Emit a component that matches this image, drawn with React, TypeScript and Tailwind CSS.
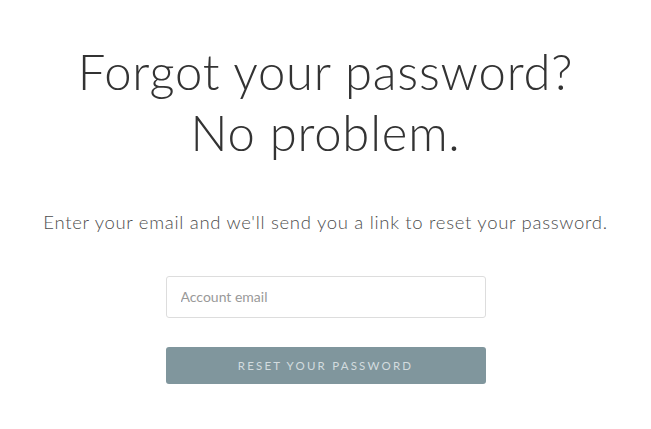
import React from "react";

export default function App() {
  return (
    <div className="min-h-[429px] w-full bg-white flex flex-col items-center pt-[41px] font-['Lato',sans-serif]">
      <h1 className="text-center text-[49px] leading-[61px] font-light text-[#333] tracking-[0.8px]">
        Forgot your password?
        <br />
        No problem.
      </h1>
      <p className="mt-[46px] text-[18.5px] font-light text-[#4d4d4d] tracking-[0.7px]">
        Enter your email and we'll send you a link to reset your password.
      </p>
      <form className="mt-[39px] w-[320px] flex flex-col" onSubmit={(e) => e.preventDefault()}>
        <input
          type="email"
          placeholder="Account email"
          className="h-[42px] w-full rounded-[3px] border border-[#ddd] px-[14px] text-[14px] text-[#333] placeholder:text-[#999] outline-none"
        />
        <button
          type="submit"
          className="mt-[29px] h-[37px] w-full rounded-[3px] bg-[#80969d] text-[11.5px] tracking-[2.2px] text-[#d3dcdf]"
        >
          RESET YOUR PASSWORD
        </button>
      </form>
    </div>
  );
}
